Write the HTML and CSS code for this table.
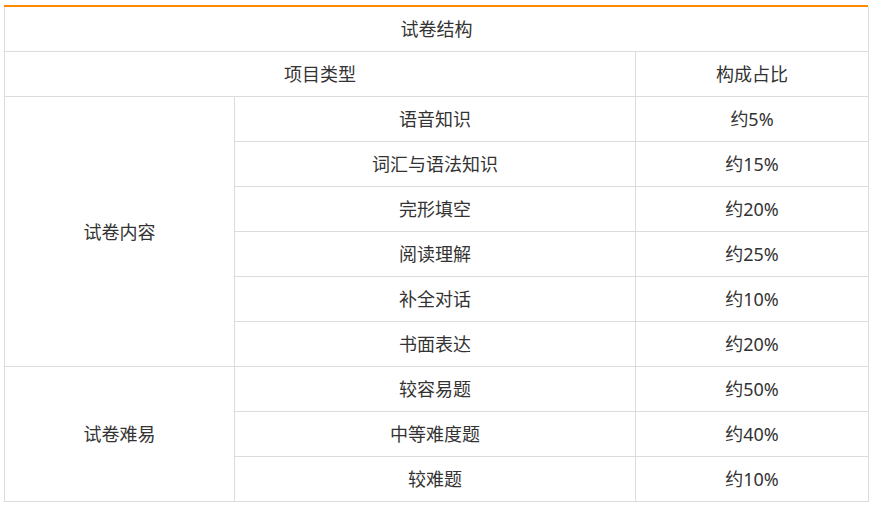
FILE: index.html
```html
<!DOCTYPE html>
<html lang="zh-CN">
<head>
<meta charset="utf-8">
<title>试卷结构</title>
<link rel="stylesheet" href="styles.css">
</head>
<body>
<div class="wrap">
  <table class="paper">
    <colgroup>
      <col class="c1">
      <col class="c2">
      <col class="c3">
    </colgroup>
    <tr class="first"><td colspan="3">试卷结构</td></tr>
    <tr><td colspan="2">项目类型</td><td>构成占比</td></tr>
    <tr><td rowspan="6">试卷内容</td><td>语音知识</td><td>约5%</td></tr>
    <tr><td>词汇与语法知识</td><td>约15%</td></tr>
    <tr><td>完形填空</td><td>约20%</td></tr>
    <tr><td>阅读理解</td><td>约25%</td></tr>
    <tr><td>补全对话</td><td>约10%</td></tr>
    <tr><td>书面表达</td><td>约20%</td></tr>
    <tr><td rowspan="3">试卷难易</td><td>较容易题</td><td>约50%</td></tr>
    <tr><td>中等难度题</td><td>约40%</td></tr>
    <tr><td>较难题</td><td>约10%</td></tr>
  </table>
</div>
</body>
</html>
```
FILE: styles.css
```css
html, body {
  margin: 0;
  padding: 0;
  background: #fff;
}
.wrap {
  margin: 5px 0 0 4px;
  width: 864px;
  border-top: 2px solid #ff8a00;
}
.paper {
  width: 864px;
  border-collapse: collapse;
  table-layout: fixed;
  font-family: "Noto Sans", "Noto Sans CJK SC", sans-serif;
  font-size: 18px;
  color: #333;
}
.c1 { width: 230px; }
.c2 { width: 401px; }
.c3 { width: 233px; }
.paper td {
  border: 1px solid #dcdcdc;
  height: 44px;
  padding: 0;
  text-align: center;
  vertical-align: middle;
  line-height: 24px;
}
.paper tr.first td {
  border-top: none;
}
```
